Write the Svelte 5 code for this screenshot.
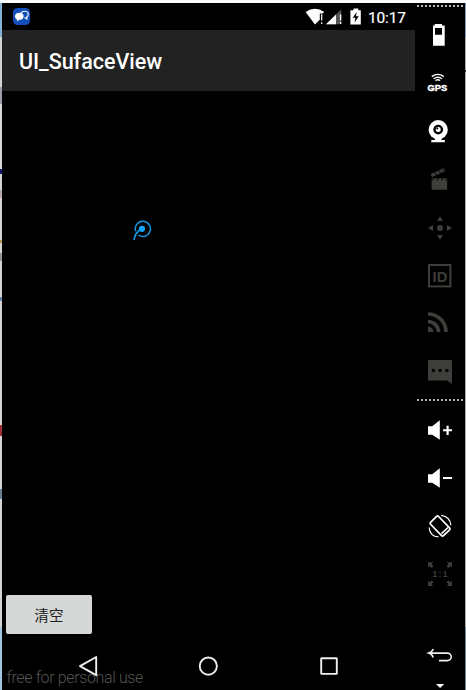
<script>
  const on = '#ffffff';
  const off = '#3e3e3b';
  const tools = [
    { id: 'battery', top: 11, c: on },
    { id: 'gps', top: 59, c: on },
    { id: 'camera', top: 107, c: on },
    { id: 'clapper', top: 155, c: off },
    { id: 'move', top: 203, c: off },
    { id: 'id', top: 251, c: off },
    { id: 'rss', top: 299, c: off },
    { id: 'sms', top: 347, c: off }
  ];
  const controls = [
    { id: 'volup', top: 406, c: on },
    { id: 'voldown', top: 454, c: on },
    { id: 'rotate', top: 502, c: on },
    { id: 'scale', top: 550, c: off }
  ];
</script>

{#snippet icon(t)}
  <svg class="tool" viewBox="415 {t.top} 50 48" fill={t.c} stroke="none">
    {#if t.id === 'battery'}
      <path fill-rule="evenodd" d="M434.7 24h7.3v1.6h2.7v20.1H433V25.6h1.7zM435 28v6.7h7V28z" />
    {:else if t.id === 'gps'}
      <g fill="none" stroke={t.c} stroke-width="1.4">
        <path d="M431.8 76.600q6-4.400 12 0M433.600 78.700q4.200-3 8.400 0M435.400 80.500q2.400-1.500 4.800 0" />
      </g>
      <text x="427.500" y="91" class="gps" textLength="19.600" lengthAdjust="spacingAndGlyphs">GPS</text>
    {:else if t.id === 'camera'}
      <circle cx="438.2" cy="129.7" r="9.6" />
      <path d="M435 138h6.5v2h3.3v2.3h-13.5V140h3.7z" />
      <circle cx="438.2" cy="129.6" r="4.9" fill="#000" />
      <circle cx="438.2" cy="129.6" r="2.5" />
      <circle cx="437.2" cy="128.6" r="1" fill="#000" />
    {:else if t.id === 'clapper'}
      <path d="M431.6 178.3h15.6v11.5h-15.6zM430.4 174.3l13.4-6.2 1.8 2.9-13.3 5.9z" />
      <path d="M434.500 172.200l2.200 2.800M438.500 170.300l2.200 2.800M442.300 168.600l2 2.700M434 178l-1.500 2.500M438.500 178l-1.500 2.500M443 178l-1.500 2.500M447.300 178l-1.500 2.500" stroke="#000" stroke-width="1" />
    {:else if t.id === 'move'}
      <path d="M440 216.2l3 4.7h-6zM440 239.8l3-4.7h-6zM428 228l5-3v6zM452 228l-5-3v6z" />
      <circle cx="440" cy="228" r="2.9" />
    {:else if t.id === 'id'}
      <rect x="429" y="265" width="21.4" height="21.4" fill="none" stroke={t.c} stroke-width="2" />
      <text x="432.600" y="281.600" class="idtext" textLength="14.600" lengthAdjust="spacingAndGlyphs">ID</text>
    {:else if t.id === 'rss'}
      <path d="M428 326.5a5.5 5.5 0 0 1 5.5 5.5H428z" />
      <path d="M428 321.5a10.5 10.5 0 0 1 10.5 10.5M428 314a18 18 0 0 1 18 18" fill="none" stroke={t.c} stroke-width="3.7" />
    {:else if t.id === 'sms'}
      <path d="M428 360h24v24l-5-3.6h-19z" />
      <g fill="#000"><circle cx="433.4" cy="370.5" r="1.8" /><circle cx="440.1" cy="370.5" r="1.8" /><circle cx="446.9" cy="370.5" r="1.8" /></g>
    {:else if t.id === 'volup'}
      <path d="M428 426.2h4.2l7.6-6v19.6l-7.6-5H428zM443 429.3h3.5v-3.6h2.2v3.6h3.4v2h-3.4v3.7h-2.2v-3.7H443z" />
    {:else if t.id === 'voldown'}
      <path d="M428 474.2h4.2l7.6-6v19.6l-7.6-5H428zM443 477h9.1v2H443z" />
    {:else if t.id === 'rotate'}
      <g fill="none" stroke={t.c}>
        <rect x="434.4" y="516.8" width="11.2" height="18.6" rx="1.4" stroke-width="1.7" transform="rotate(-44 440 526)" />
        <path d="M441.5 533.7l6.5-6.2" stroke-width="1.6" />
        <path d="M441.2 515.3q9 1.3 9.7 10M429.1 527.5q.8 9 9.4 9.4" stroke-width="1.2" />
      </g>
    {:else if t.id === 'scale'}
      <path d="M428 562.3h5.2l-1.7 1.7 2 2-1.9 1.9-2-2-1.6 1.6zM452 562.3h-5.2l1.7 1.7-2 2 1.9 1.9 2-2 1.6 1.6zM428 586h5.2l-1.7-1.7 2-2-1.9-1.9-2 2-1.6-1.6zM452 586h-5.2l1.7-1.7-2-2 1.9-1.9 2 2 1.6-1.6z" />
      <text x="432.5" y="577.2" class="ratio" textLength="15">1:1</text>
    {/if}
  </svg>
{/snippet}

<div class="window">
  <div class="edge left"></div>
  <main class="phone">
    <header class="status">
      <svg class="chat" width="17" height="17" viewBox="0 0 17 17">
        <rect width="17" height="17" rx="4.5" fill="#124fb9" />
        <path d="M8 5.200Q9 3 12 3.200q3.400.3 3.200 3.400-.2 2.200-1.700 2.600l.4 1.800-2.400-1.400" fill="none" stroke="#fff" stroke-width="1.1" />
        <ellipse cx="6.300" cy="8.300" rx="4.300" ry="3.500" fill="#fff" />
        <path d="M4 10.500v2.800l3-2z" fill="#fff" />
      </svg>
      <svg class="signals" width="56" height="17" viewBox="305 8.5 56 17">
        <path d="M305.6 12.4Q315 6.3 324.2 12.4l-1.4 1.7h-3v6.2l-4.9 4.7z" fill="#fff" />
        <path d="M321.7 14.8v6.2M321.7 22.7v1.9" stroke="#fff" stroke-width="1.2" />
        <path d="M341.3 9.7v15H326z" fill="#555" />
        <path d="M336 15v9.7h-10z" fill="#fff" />
        <path d="M340.6 15v6M340.6 22.6v2" stroke="#fff" stroke-width="1.3" />
        <path d="M353.5 9h4.8v1.7h2.5V25h-10.4V10.7h3.1z" fill="#fff" />
        <path d="M356.7 12.5l-4 5.8h2.7l-.8 4.7 4.2-6.2h-2.8z" fill="#000" />
      </svg>
      <span class="time">10:17</span>
    </header>
    <div class="appbar"><h1>UI_SufaceView</h1></div>
    <section class="surface">
      <svg class="trace" width="20" height="22" viewBox="132 219 20 22">
        <g fill="none" stroke="#1595e0" stroke-width="1.5">
          <path d="M135.6 231.2A7.6 7.6 0 1 1 138.3 235" />
          <path d="M141.7 229.1Q135.2 231.8 134 240" stroke-width="1.7" />
        </g>
        <circle cx="142" cy="228.8" r="3.1" fill="#18a5ff" />
      </svg>
      <button>清空</button>
    </section>
    <nav>
      <span class="mark">free for personal use</span>
      <svg width="413" height="48" viewBox="2 642 413 48" fill="none" stroke="#eee" stroke-width="1.9">
        <path d="M96.2 657v18.2L80 666.2z" stroke-linejoin="round" />
        <circle cx="208.3" cy="666.1" r="8.6" />
        <rect x="321.2" y="658.3" width="15.6" height="15.6" rx=".5" />
      </svg>
    </nav>
  </main>
  <aside>
    <div class="dots"></div>
    <div class="group">{#each tools as t}{@render icon(t)}{/each}</div>
    <div class="dots"></div>
    <div class="group lower">{#each controls as t}{@render icon(t)}{/each}</div>
    <svg class="back" viewBox="415 640 50 50">
      <path d="M429 653.1h18.5a3.7 3.7 0 0 1 0 7.5H439M433.2 649q-1 3-4.5 4.100 3.500 1 4.500 4.300" fill="none" stroke="#eee" stroke-width="1.6" />
      <path d="M436 684h8.200l-4.100 4z" fill="#fff" />
    </svg>
  </aside>
  <div class="edge right"></div>
</div>

<style>
  :global(body) { background: #f8fafc; }
  .window { box-sizing: border-box; width: 466px; height: 690px; padding-top: 3px; display: flex; overflow: hidden; font-family: Roboto, "Noto Sans CJK SC", sans-serif; color: #fff; }
  .edge { flex: none; height: 687px; }
  .left { width: 2px; background: linear-gradient(#82b2d8 0 34px, #d4d4d2 34px 84px, #9aa0a5 84px 101px, #d8d8d6 101px 166px, #171a68 166px 171px, #d4d4d2 171px 187px, #bba7b1 187px 195px, #d4d4d2 195px 237px, #b29443 237px 240px, #d4d4d2 240px 250px, #8e969e 250px 258px, #d4d4d2 258px 294px, #6687a9 294px 298px, #d4d4d2 298px 422px, #a52e32 422px 433px, #d4d4d2 433px 486px, #687e91 486px 496px, #d4d4d2 496px 624px, #9fc7df 624px); }
  .right { width: 1px; background: linear-gradient(#7c9ebc 0 34px, #aaa 34px 67px, #222 67px 69px, #aaa 69px 624px, #6e8596 624px); }
  .phone { width: 413px; height: 687px; background: #000; display: flex; flex-direction: column; }
  .status { height: 27px; display: flex; align-items: flex-start; padding: 5px 9px 0 11px; box-sizing: border-box; }
  .signals { margin-left: auto; }
  .time { width: 38px; margin-left: 7px; padding-top: 1px; font-size: 15.5px; font-weight: 400; line-height: 18px; white-space: nowrap; letter-spacing: -.15px; -webkit-text-stroke: .2px #fff; }
  .appbar { box-sizing: border-box; height: 61px; background: #222; display: flex; align-items: center; padding: 2px 0 0 17px; }
  h1 { margin: 0; font-size: 21.5px; font-weight: 500; line-height: 28px; letter-spacing: -.03px; }
  .surface { height: 551px; box-sizing: border-box; padding-left: 4px; display: flex; flex-direction: column; align-items: flex-start; }
  .trace { margin: 128px 0 0 125.500px; }
  button { margin-top: auto; margin-bottom: 8px; width: 86px; height: 39px; padding: 0 0 1px; border: 0; border-radius: 2px; background: #d6d7d7; color: #222; font: 14.500px "Noto Sans CJK SC", sans-serif; }
  nav { height: 48px; display: grid; }
  nav > * { grid-area: 1 / 1; }
  .mark { align-self: end; padding: 0 0 2px 4.500px; font-size: 16px; font-weight: 300; line-height: 20px; letter-spacing: -.37px; color: #555; white-space: nowrap; }
  aside { width: 50px; height: 687px; background: #000; display: flex; flex-direction: column; }
  .dots { height: 2px; margin: 2px 2px 0; background: repeating-linear-gradient(90deg, #bbb 0 2px, #000 2px 4px); }
  .group { display: flex; flex-direction: column; padding-top: 4px; }
  .group + .dots { margin-top: 4px; }
  .lower { padding-top: 5px; }
  .tool { display: block; width: 50px; height: 48px; }
  .back { display: block; width: 50px; height: 50px; margin-top: auto; }
  .gps { font: 700 8.500px "Liberation Sans", sans-serif; stroke: #fff; stroke-width: .4px; }
  .idtext { font: 700 15px "Liberation Sans", sans-serif; }
  .ratio { font: 700 8.500px "Liberation Sans", sans-serif; }
</style>
